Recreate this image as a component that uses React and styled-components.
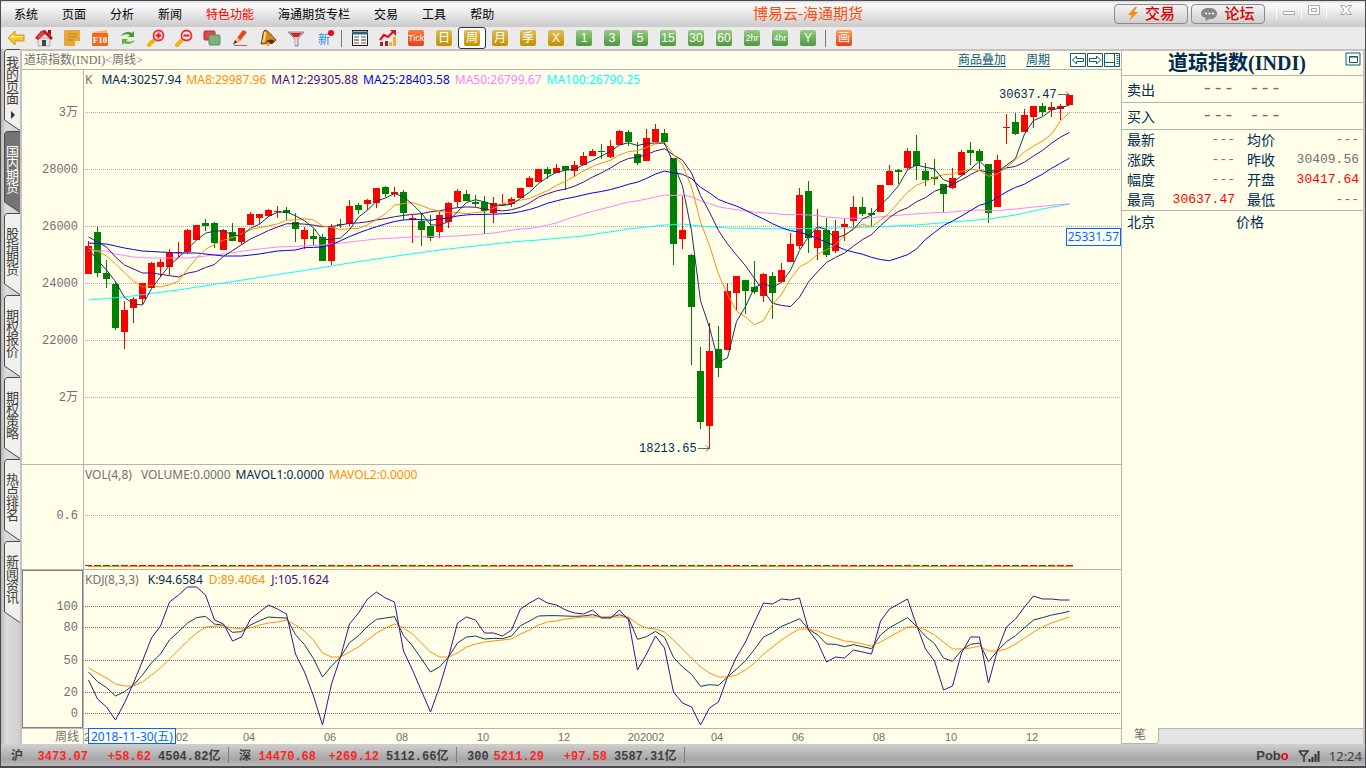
import React from 'react';
import styled, { createGlobalStyle, css } from 'styled-components';

const colors = {
  paper: '#ffffea',
  line: '#b4b4b4',
  edge: '#c9c1c1',
  navy: '#002b55',
  link: '#0b5a86',
  grey: '#707070',
  orange: '#ff8c10',
  purple: '#4b0a82',
  blue: '#0000f0',
  pink: '#ff80ff',
  cyan: '#00ffff',
  red: '#ff0000',
  green: '#008000',
  tag: '#0066ff'
};

const fonts = {
  ui: '"Liberation Sans", "Noto Sans CJK SC", sans-serif',
  serif: '"Liberation Serif", "Noto Sans CJK SC", serif',
  mono: '"Liberation Mono", "Noto Sans CJK SC", monospace',
  legend: '"Noto Sans", "Noto Sans CJK SC", sans-serif'
};

const GlobalStyle = createGlobalStyle`
  * {
    box-sizing: border-box;
  }
  body {
    margin: 0;
    background: #c8c8c8;
    font-family: ${fonts.ui};
    font-size: 12px;
  }
  button {
    margin: 0;
    padding: 0;
    border: 0;
    background: none;
    font: inherit;
    color: inherit;
    cursor: pointer;
  }
`;

/* ---------- data ---------- */

// [up, high, top, bottom, low] in plot units, one entry per week
const CANDLES = [
  [1, 241, 246, 274, 274], [0, 227, 232, 273, 277], [0, 260, 273, 279, 288], [0, 282, 284, 328, 330],
  [1, 301, 310, 332, 349], [1, 297, 299, 308, 323], [1, 283, 283, 299, 304], [1, 262, 263, 288, 288],
  [1, 259, 262, 267, 277], [1, 249, 253, 267, 275], [1, 242, 252, 253, 257], [1, 229, 230, 252, 254],
  [1, 225, 225, 240, 240], [0, 219, 223, 226, 231], [0, 222, 223, 243, 248], [1, 229, 230, 250, 250],
  [0, 223, 232, 241, 241], [1, 228, 228, 242, 245], [1, 212, 214, 225, 225], [1, 214, 214, 218, 224],
  [1, 209, 210, 216, 217], [1, 206, 211, 212, 218], [0, 207, 210, 213, 220], [0, 213, 222, 229, 242],
  [1, 227, 230, 239, 249], [0, 229, 236, 239, 245], [0, 234, 237, 261, 261], [1, 224, 227, 261, 265],
  [0, 219, 224, 225, 228], [1, 200, 206, 224, 226], [0, 203, 205, 210, 214], [1, 199, 200, 204, 210],
  [1, 188, 188, 203, 208], [0, 186, 187, 194, 197], [1, 187, 192, 194, 197], [0, 190, 192, 213, 220],
  [1, 215, 218, 219, 243], [0, 213, 221, 230, 246], [0, 215, 226, 238, 241], [1, 212, 215, 232, 238],
  [1, 202, 203, 222, 228], [1, 189, 191, 202, 207], [0, 190, 194, 201, 201], [0, 195, 202, 204, 207],
  [0, 196, 202, 211, 234], [1, 197, 203, 213, 223], [1, 194, 204, 205, 206], [1, 197, 199, 204, 207],
  [1, 188, 188, 198, 198], [1, 176, 178, 187, 187], [1, 169, 169, 182, 182], [0, 167, 169, 174, 179],
  [1, 164, 168, 173, 173], [0, 166, 166, 170, 190], [1, 161, 165, 171, 177], [1, 152, 156, 165, 165],
  [1, 149, 151, 156, 156], [0, 144, 151, 152, 159], [1, 140, 146, 157, 158], [1, 130, 131, 145, 145],
  [0, 130, 132, 142, 146], [0, 142, 154, 163, 165], [1, 129, 138, 161, 161], [1, 124, 129, 142, 142],
  [0, 129, 133, 142, 145], [0, 158, 158, 244, 265], [1, 196, 230, 239, 249], [0, 254, 255, 307, 365],
  [0, 347, 371, 422, 429], [1, 323, 351, 426, 449], [0, 326, 349, 368, 377], [1, 283, 291, 350, 350],
  [1, 276, 276, 293, 310], [0, 280, 280, 291, 314], [0, 261, 287, 292, 294], [1, 273, 274, 296, 302],
  [0, 272, 276, 293, 319], [1, 263, 270, 282, 282], [1, 233, 244, 262, 262], [1, 188, 195, 246, 249],
  [0, 181, 191, 238, 253], [1, 209, 230, 248, 260], [0, 218, 230, 255, 257], [1, 220, 231, 251, 253],
  [1, 219, 224, 227, 241], [1, 196, 207, 221, 227], [0, 197, 207, 214, 216], [0, 208, 213, 215, 226],
  [1, 185, 185, 212, 212], [1, 165, 171, 185, 185], [0, 169, 170, 172, 184], [1, 148, 151, 168, 169],
  [0, 135, 151, 166, 180], [0, 163, 171, 180, 186], [0, 159, 177, 179, 185], [0, 184, 184, 194, 212],
  [1, 168, 178, 188, 189], [1, 150, 152, 175, 176], [0, 142, 150, 153, 165], [0, 149, 151, 161, 169],
  [0, 164, 164, 213, 223], [1, 155, 160, 207, 207], [1, 114, 127, 128, 144], [0, 113, 122, 134, 135],
  [1, 109, 115, 132, 132], [1, 106, 106, 117, 128], [0, 103, 106, 112, 116], [1, 102, 107, 110, 117],
  [1, 104, 106, 109, 120], [1, 95, 95, 105, 105]
];

// `lead` holds [week, value] points for the weeks that have no full window yet
const AVERAGES = [
  {
    period: 100,
    color: colors.cyan,
    lead: [[0, 300], [4, 297], [10, 290], [15, 283], [20, 276], [25, 269], [29, 263], [32, 259], [35, 255],
      [39, 250], [42, 247], [47, 242], [50, 240], [55, 236], [60, 229], [64, 225], [66, 224], [68, 226],
      [71, 228], [77, 229], [83, 228], [87, 227], [92, 225], [96, 222], [100, 219], [103, 215], [106, 209],
      [109, 204]]
  },
  {
    period: 50,
    color: colors.pink,
    lead: [[0, 251], [2, 251], [3, 254], [5, 257], [7, 258], [11, 258], [13, 256], [15, 254], [18, 250],
      [21, 247], [24, 246], [26, 245], [29, 242], [32, 239], [36, 237], [41, 236], [45, 233], [48, 229]]
  },
  {
    period: 25,
    color: colors.blue,
    lead: [[0, 243], [2, 244], [4, 248], [6, 251], [10, 253], [12, 253], [15, 256], [17, 256], [19, 254],
      [21, 251], [23, 250]]
  },
  {
    period: 12,
    color: colors.purple,
    lead: [[0, 237], [1, 242], [2, 247], [3, 257], [4, 265], [6, 273], [7, 273], [10, 277]]
  },
  {
    period: 8,
    color: colors.orange,
    lead: [[0, 248], [1, 251], [2, 256], [3, 264], [5, 281], [6, 287]]
  },
  { period: 4, color: '#123a58', lead: [[0, 249], [1, 260], [2, 270]] }
];

const KDJ_J = [
  110, 129, 137, 150, 133, 113, 91, 68, 56, 32, 25, 17, 17, 25, 50, 54, 71, 67, 49, 42, 35, 39, 44, 84, 102,
  126, 155, 114, 87, 54, 43, 29, 22, 28, 32, 81, 100, 121, 142, 117, 87, 53, 47, 50, 63, 63, 66, 60, 39, 33,
  28, 33, 35, 40, 43, 44, 40, 48, 48, 40, 50, 100, 84, 66, 78, 122, 133, 137, 155, 138, 132, 107, 87, 72, 52,
  33, 34, 29, 30, 28, 60, 72, 92, 87, 88, 80, 82, 84, 51, 39, 34, 29, 55, 79, 91, 120, 116, 83, 67, 67, 113,
  80, 57, 49, 37, 26, 29, 29, 30, 30
];

const KDJ_D = [
  98, 103, 108, 114, 116, 116, 112, 105, 98, 89, 80, 71, 63, 57, 56, 56, 58, 59, 58, 55, 53, 52, 50, 55, 61,
  70, 83, 87, 87, 82, 77, 70, 63, 58, 54, 58, 64, 73, 82, 87, 87, 83, 77, 74, 72, 71, 70, 69, 64, 60, 55, 52,
  51, 49, 48, 47, 47, 47, 47, 47, 47, 54, 58, 59, 62, 70, 79, 88, 97, 103, 107, 107, 105, 100, 93, 84, 77, 70,
  64, 59, 59, 61, 65, 68, 71, 72, 74, 76, 72, 67, 62, 57, 57, 60, 65, 72, 79, 79, 78, 76, 81, 81, 79, 74, 68,
  62, 57, 53, 50, 47
];

// J = 3K - 2D
const KDJ_K = KDJ_J.map((j, i) => (j + 2 * KDJ_D[i]) / 3);

const MENU = ['系统', '页面', '分析', '新闻', '特色功能', '海通期货专栏', '交易', '工具', '帮助'];
const TABS = ['我的页面', '国内期货', '股指期货', '期权报价', '期权策略', '热点排名', '新闻资讯'];

const QUOTES = [
  ['最新', '---', '均价', '---'],
  ['涨跌', '---', '昨收', '30409.56'],
  ['幅度', '---', '开盘', '30417.64'],
  ['最高', '30637.47', '最低', '---']
];

const MARKETS = [
  { name: '沪', value: '3473.07', change: '+58.62', volume: '4504.82亿' },
  { name: '深', value: '14470.68', change: '+269.12', volume: '5112.66亿' },
  { name: '300', value: '5211.29', change: '+97.58', volume: '3587.31亿' }
];

const MONTHS = [
  [3, '2'], [98, '02'], [165, '04'], [246, '06'], [318, '08'], [399, '10'], [480, '12'],
  [562, '202002'], [633, '04'], [714, '06'], [795, '08'], [867, '10'], [948, '12']
];

/* ---------- chart helpers ---------- */

const STEP = 9;
const TOP = 70;
const xAt = i => 4 + i * STEP + 0.5;

const toPoints = (values, offset = 0) => values.map((v, i) => `${xAt(i)},${v - offset}`).join(' ');

function interpolate(points, i) {
  const next = points.findIndex(p => p[0] >= i);
  if (points[next][0] === i) return points[next][1];
  const [x0, y0] = points[next - 1];
  const [x1, y1] = points[next];
  return y0 + ((y1 - y0) * (i - x0)) / (x1 - x0);
}

function movingAverage({ period, lead }) {
  const closes = CANDLES.map(([up, , top, bottom]) => (up ? top : bottom));
  const last = lead[lead.length - 1][0];
  return closes.map((c, i) => {
    if (i <= last) return interpolate(lead, i);
    const span = closes.slice(i - period + 1, i + 1);
    return span.reduce((a, b) => a + b, 0) / period;
  });
}

/* ---------- frame ---------- */

const Window = styled.div`
  display: flex;
  flex-direction: column;
  min-height: 100vh;
  border: solid #4c4a4e;
  border-width: 1px 1px 2px 1px;
  background: #ebebeb;
`;

const MenuBar = styled.header`
  display: flex;
  align-items: center;
  justify-content: space-between;
  height: 26px;
  padding-left: 13px;
  background: linear-gradient(#d8d8d8 0, #fafafa 3px, #f0f0f0 9px, #cacaca);
`;

const Menu = styled.nav`
  display: flex;
  gap: 24px;
  padding-top: 2px;
`;

const MenuItem = styled.button`
  line-height: 20px;
  color: ${({ $hot }) => ($hot ? colors.red : '#000')};
`;

const AppTitle = styled.h1`
  margin: 0 0 0 8px;
  font-size: 15px;
  font-weight: 400;
  line-height: 20px;
  color: #ff4d0d;
`;

const WindowTools = styled.div`
  display: flex;
  align-items: center;
  gap: 3px;
  height: 100%;
`;

const PillButton = styled.button`
  display: flex;
  align-items: center;
  justify-content: center;
  gap: 6px;
  width: 74px;
  height: 20px;
  border: 1px solid #8a8a8a;
  border-radius: 4px;
  background: linear-gradient(#f4f4f4, #cfcfcf);
  color: #e00000;
  font-size: 15px;
  font-weight: 500;
  line-height: 18px;
`;

const Controls = styled.div`
  display: flex;
  align-items: flex-start;
  height: 22px;
  margin-left: 8px;
`;

const Control = styled.button`
  width: ${({ $wide }) => ($wide ? 39 : 25)}px;
  height: 16px;
  border-left: 1px solid #fff;
`;

const Toolbar = styled.div`
  display: flex;
  align-items: center;
  height: 22px;
  padding-left: 1px;
`;

const ToolButton = styled.button`
  display: flex;
  align-items: center;
  justify-content: center;
  width: 28px;
  height: 22px;
  border: 1px solid transparent;
  border-radius: 3px;
  ${({ $active }) =>
    $active &&
    css`
      border-color: #333;
      background: #fff;
    `}
`;

const Divider = styled.span`
  width: 2px;
  height: 17px;
  margin: 0 3px;
  border-left: 1px solid #777;
`;

const tones = {
  gold: 'linear-gradient(#dcbc5c, #c49000)',
  green: 'linear-gradient(#98cc84, #4c9840)',
  tick: 'linear-gradient(#ff7a48, #e84018)',
  paint: 'linear-gradient(#ffa050, #ee3a18)'
};

const Badge = styled.span`
  width: 16px;
  height: 16px;
  border-radius: 2px;
  background: ${({ $tone }) => tones[$tone]};
  color: #fffff0;
  font-size: ${({ $small }) => ($small ? 9 : 12)}px;
  line-height: 16px;
  text-align: center;
`;

const NewLabel = styled.span`
  position: relative;
  color: #2f8be6;
  font-size: 12px;

  &::after {
    content: '';
    position: absolute;
    top: 0;
    right: -4px;
    width: 6px;
    height: 6px;
    border-radius: 50%;
    background: #ff0010;
  }
`;

const Body = styled.main`
  display: grid;
  grid-template-columns: 19px minmax(0, 1fr) 243px;
  flex: 1;
`;

/* ---------- side tabs ---------- */

const SideBar = styled.nav`
  display: flex;
  flex-direction: column;
  padding-left: 2px;
  background: linear-gradient(90deg, #b8b8b8, #dcdcdc 5px, #cfcfcf);
`;

const SideTab = styled.button`
  position: relative;
  height: 82px;
  padding: 0 1px 5px 3px;
  font-size: 13px;
  line-height: 12px;
  color: ${({ $active }) => ($active ? '#fff' : '#404040')};

  svg {
    position: absolute;
    top: 0;
    left: 0;
  }
  span {
    position: relative;
    display: block;
    width: 13px;
    word-break: break-all;
  }
`;

const Arrow = styled.i`
  display: block;
  width: 0;
  margin: 6px auto 0 5px;
  border: solid transparent;
  border-width: 4px 0 4px 4px;
  border-left-color: #333;
`;

/* ---------- chart ---------- */

const Chart = styled.section`
  display: grid;
  grid-template-rows: 19px minmax(395px, 1fr) 105px 159px 15px;
  border-top: 2px solid ${colors.edge};
  border-left: 2px solid ${colors.edge};
  border-right: 1px solid ${colors.line};
  background: ${colors.paper};
  min-width: 0;
`;

const ChartHeader = styled.div`
  display: flex;
  align-items: center;
  padding-left: 2px;
  border-bottom: 1px solid ${colors.line};
`;

const ChartName = styled.h2`
  flex: 1;
  margin: 0;
  font: 400 12px/17px ${fonts.serif};
  color: ${colors.grey};
`;

const HeaderLink = styled.a`
  margin-right: 20px;
  font-size: 12px;
  line-height: 16px;
  color: ${colors.link};
  text-underline-offset: 2px;
`;

const Pane = styled.div`
  display: grid;
  grid-template-columns: 61px minmax(0, 1fr);
  grid-template-rows: minmax(0, 1fr);
  min-height: 0;
  border-bottom: 1px solid ${colors.line};
`;

const Scale = styled.svg`
  display: block;
  width: 100%;
  height: 100%;
  font-family: ${fonts.mono};
  font-size: 12px;
  fill: ${colors.grey};
  text-anchor: end;
  ${({ $boxed }) =>
    $boxed &&
    css`
      border: 1px solid #808080;
    `}
`;

const PlotArea = styled.div`
  position: relative;
  border-left: 1px solid ${colors.line};
`;

const Plot = styled.svg`
  display: block;
  width: 100%;
  height: 100%;
  font-family: ${fonts.mono};
  font-size: 12px;
  fill: ${colors.navy};
`;

const Legend = styled.div`
  position: absolute;
  top: 1px;
  left: 1px;
  display: flex;
  gap: 5px;
  font: 12px/17px ${fonts.legend};
  white-space: nowrap;
`;

const LegendItem = styled.span`
  color: ${({ $color }) => $color};
  margin-right: ${({ $gap }) => $gap || 0}px;
`;

const Tag = styled.div`
  position: absolute;
  border: 1px solid ${colors.tag};
  background: #fff;
  color: ${colors.tag};
  font: 12px/16px ${fonts.legend};
  padding: 0 1px;
  white-space: nowrap;
`;

const PriceTag = styled(Tag)`
  top: 158px;
  right: 0;
`;

const DateTag = styled(Tag)`
  top: -1px;
  left: 4px;
  height: 16px;
  padding: 0 2px;
`;

const DateRow = styled(Pane)`
  border-bottom: 0;
`;

const DateLabels = styled(Plot)`
  font-family: ${fonts.ui};
  font-size: 11px;
  fill: ${colors.grey};
  text-anchor: middle;
`;

/* ---------- quote panel ---------- */

const Panel = styled.aside`
  display: flex;
  flex-direction: column;
  border-top: 2px solid ${colors.edge};
  border-right: 2px solid ${colors.edge};
  background: ${colors.paper};
  color: ${colors.navy};
  font-size: 14px;
`;

const PanelTitle = styled.div`
  display: flex;
  align-items: flex-start;
  height: 25px;
  padding: 1px 1px 0 7px;
  border-bottom: 1px solid ${colors.line};

  h2 {
    flex: 1;
    margin: 0;
    font: 700 20px/23px ${fonts.serif};
    text-align: center;
  }
`;

const BookRow = styled.div`
  display: flex;
  align-items: center;
  height: 27px;
  padding-left: 5px;
  border-bottom: 1px solid ${colors.line};

  b {
    width: 75px;
    font-weight: 400;
  }
  span {
    width: 47px;
    font: 18px/20px ${fonts.mono};
    color: ${colors.grey};
  }
`;

const QuoteTable = styled.table`
  width: 100%;
  table-layout: fixed;
  border-collapse: collapse;
  border-bottom: 1px solid ${colors.line};

  th,
  td {
    height: 20px;
    padding: 0;
    line-height: 20px;
  }
  th {
    width: 41px;
    padding-left: 5px;
    font-weight: 400;
    text-align: left;
  }
  th + td + th {
    width: 48px;
    padding-left: 12px;
  }
`;

const Price = styled.td`
  width: ${({ $last }) => ($last ? 'auto' : '72px')};
  font-family: ${fonts.mono};
  font-size: 13px;
  text-align: right;
  color: ${({ $up }) => ($up ? colors.red : colors.grey)};

  &&:last-child {
    padding-right: 4px;
  }
`;

const TradesHead = styled.div`
  display: flex;
  flex: 1;
  padding: 1px 0 0 5px;
  line-height: 20px;

  span {
    width: 109px;
  }
`;

const PanelTabs = styled.div`
  display: flex;
  height: 16px;
  border-top: 1px solid ${colors.line};
  background: #e4e4e4;

  button {
    width: 37px;
    margin-top: -1px;
    border: solid ${colors.line};
    border-width: 0 1px 1px 0;
    border-radius: 0 0 4px 0;
    background: ${colors.paper};
    color: ${colors.grey};
    font-size: 12px;
    line-height: 15px;
  }
`;

/* ---------- status bar ---------- */

const StatusBar = styled.footer`
  display: flex;
  align-items: center;
  height: 22px;
  background: linear-gradient(#d0d0d0, #a6a6a6 70%, #bcbcbc);
  font: 700 12px/20px ${fonts.mono};
  color: #404040;
`;

const Market = styled.div`
  display: grid;
  grid-template-columns: 77px 63px 1fr;
  width: 228px;
  padding: 2px 0 0 10px;
  height: 16px;
  line-height: 16px;
  border-right: 1px solid #808080;
  white-space: nowrap;

  em {
    font-style: normal;
    color: #fa2828;
    text-align: right;
  }
  div {
    display: flex;
    justify-content: space-between;
  }
  span {
    padding-left: 7px;
  }
`;

const StatusRight = styled.div`
  display: flex;
  align-items: center;
  gap: 9px;
  margin-left: auto;
  padding: 2px 3px 0 0;
  font-family: ${fonts.ui};

  strong {
    font-size: 13px;
  }
  strong i {
    color: #f00000;
    font-style: normal;
  }
  time {
    font: 13px/20px ${fonts.legend};
  }
`;

/* ---------- icons ---------- */

const Icon = ({ children, size = 18 }) => (
  <svg width={size} height={size} viewBox="0 0 18 18" aria-hidden="true">
    {children}
  </svg>
);

const BackIcon = () => (
  <Icon>
    <path d="M1 9l7-7v4h9v6H8v4z" fill="#f8c428" stroke="#c48a10" strokeWidth="0.8" />
    <path d="M3 9l4-4v2h9v1z" fill="#fde880" />
  </Icon>
);

const HomeIcon = () => (
  <Icon>
    <path d="M3 9h12v8H3z" fill="#e4e4ec" stroke="#888" strokeWidth="0.6" />
    <path d="M7 11h4v6H7z" fill="#444" />
    <path d="M0 9l6-7 4-1 8 8-2 2-6-6-7 6z" fill="#c81018" />
    <path d="M2 8l5-6 3 3-6 5z" fill="#e84048" />
    <path d="M13 1h3v6l-3-3z" fill="#a01010" />
  </Icon>
);

const NoteIcon = () => (
  <Icon>
    <path d="M2 1h15v11l-5 5H1V2z" fill="#e8a838" />
    <path d="M12 17v-5h5z" fill="#ffe4b0" />
    <path d="M5 5h9M5 8h9M4 11h7" stroke="#c08020" />
  </Icon>
);

const F10Icon = () => (
  <Icon>
    <path d="M2 3l14-2v14H2z" fill="#f8b070" />
    <rect x="1" y="4" width="16" height="13" rx="1" fill="#f06820" />
    <text x="9" y="14" fontSize="9" fontWeight="700" fill="#fff" textAnchor="middle" fontFamily="Liberation Serif">
      F10
    </text>
  </Icon>
);

const RefreshIcon = () => (
  <Icon>
    <path d="M2 7c2-4 8-5 11-3l2-2v6H9l2-2C9 5 5 5 2 7z" fill="#3fa028" />
    <path d="M16 11c-2 4-8 5-11 3l-2 2v-6h6l-2 2c2 1 6 1 9-1z" fill="#58b838" />
  </Icon>
);

const ZoomIcon = ({ plus }) => (
  <Icon>
    <path d="M7 11l-5 5" stroke="#f4b010" strokeWidth="4" strokeLinecap="round" />
    <circle cx="11.500" cy="6.500" r="5" fill="#ffe8e8" stroke="#e83030" strokeWidth="1.800" />
    <path d={plus ? 'M8.500 6.500h6M11.500 3.500v6' : 'M8.500 6.500h6'} stroke="#e02020" strokeWidth="2" />
  </Icon>
);

const OverlayIcon = () => (
  <Icon>
    <rect x="1" y="2" width="11" height="9" rx="1" fill="#e04848" stroke="#b83030" />
    <rect x="6" y="6" width="11" height="10" rx="1" fill="#80b080" stroke="#589060" />
  </Icon>
);

const PencilIcon = () => (
  <Icon>
    <path d="M12 1l4 2-7 9-4 2 1-5z" fill="#f04020" />
    <path d="M6 8l3 3-2 2-3-2z" fill="#f8c890" />
    <path d="M4 11l2 2-4 3z" fill="#303030" />
    <path d="M3 16.500h13" stroke="#f05030" />
  </Icon>
);

const BellIcon = () => (
  <Icon>
    <path d="M6 1c4 1 6 5 11 10l-3 3-12 1C4 10 3 3 6 1z" fill="#d88c20" stroke="#783808" />
    <path d="M6 3c0 4 0 7-2 10" stroke="#ffe080" strokeWidth="2" fill="none" />
    <path d="M7 13c2-3 5-3 8-2l-1 3-6 2z" fill="#602808" />
    <circle cx="9" cy="15" r="2" fill="#e8a830" />
  </Icon>
);

const FilterIcon = () => (
  <Icon>
    <path d="M1 3h16l-6 7v7H8v-7z" fill="#c8ccd0" stroke="#787c80" strokeWidth="0.800" />
    <path d="M3 4h12l-4 4H7z" fill="#e81820" />
    <path d="M9 10v6" stroke="#f4f4f4" />
  </Icon>
);

const ListIcon = () => (
  <Icon>
    <rect x="1.500" y="1.500" width="15" height="15" fill="#fff" stroke="#222" />
    <path d="M1 4h16" stroke="#306080" strokeWidth="3" />
    <path d="M3 8h5M10 8h5" stroke="#208020" />
    <path d="M3 11h5M10 11h5" stroke="#202080" />
    <path d="M3 14h5M10 14h5" stroke="#c02020" />
  </Icon>
);

const TrendIcon = () => (
  <Icon>
    <path d="M1 17v-4h3v4zM6 17v-5h3v5z" fill="#b02028" />
    <path d="M10 17v-4h3v4zM14 17V8h3v9z" fill="#e8b040" />
    <path d="M1 11l4-5 4 2 6-6" stroke="#e01018" strokeWidth="2.200" fill="none" />
    <path d="M11 1h6v6z" fill="#e01018" />
  </Icon>
);

const SignalIcon = () => (
  <svg width="22" height="14" viewBox="0 0 22 14" aria-hidden="true">
    <path d="M1 2h9L6 7v6M5 7L1 2" fill="none" stroke="#333" strokeWidth="1.500" />
    <path d="M11.500 10v3M14.500 8v5M17.500 5v8M20.500 2v11" stroke="#333" strokeWidth="2" />
  </svg>
);

const NavIcons = () => (
  <svg width="51" height="15" viewBox="0 0 51 15" aria-hidden="true">
    <g fill="none" stroke={colors.link}>
      <path d="M.5.5h15v13H.5zM17.500.5h15v13h-15zM34.500.5h15v13h-15z" />
      <path d="M2.500 7l4-4v2.500h7v3h-7V11zM30.500 7l-4-4v2.500h-7v3h7V11z" />
      <path d="M34.500 9.500h10M44.500.5v13" />
      <path d="M47.500 2v10" strokeDasharray="1 1" strokeWidth="2" />
    </g>
  </svg>
);

const TabShape = ({ active }) => (
  <svg width="17" height="82" aria-hidden="true">
    <path
      d="M17 .5H3.500L1.500 3v68L17 81.500"
      fill={active ? '#747474' : '#f0f0ec'}
      stroke="#4a4a4a"
    />
  </svg>
);

/* ---------- toolbar ---------- */

const ACTIONS = [
  ['后退', <BackIcon />],
  ['主页', <HomeIcon />],
  ['笔记', <NoteIcon />],
  ['资料', <F10Icon />],
  ['刷新', <RefreshIcon />],
  ['放大', <ZoomIcon plus />],
  ['缩小', <ZoomIcon />],
  ['叠加', <OverlayIcon />],
  ['画笔', <PencilIcon />],
  ['预警', <BellIcon />],
  ['筛选', <FilterIcon />],
  ['新功能', <NewLabel>新</NewLabel>]
];

const PERIODS = [
  ['Tick', 'tick'], ['日', 'gold'], ['周', 'gold'], ['月', 'gold'], ['季', 'gold'], ['X', 'gold'],
  ['1', 'green'], ['3', 'green'], ['5', 'green'], ['15', 'green'], ['30', 'green'], ['60', 'green'],
  ['2hr', 'green'], ['4hr', 'green'], ['Y', 'green']
];

const ToolStrip = () => (
  <Toolbar>
    {ACTIONS.map(([label, icon]) => (
      <ToolButton key={label} aria-label={label}>
        {icon}
      </ToolButton>
    ))}
    <Divider />
    <ToolButton aria-label="报价">
      <ListIcon />
    </ToolButton>
    <ToolButton aria-label="走势">
      <TrendIcon />
    </ToolButton>
    {PERIODS.map(([label, tone]) => (
      <ToolButton key={label} $active={label === '周'}>
        <Badge $tone={tone} $small={label.length > 2}>
          {label}
        </Badge>
      </ToolButton>
    ))}
    <Divider />
    <ToolButton>
      <Badge $tone="paint">画</Badge>
    </ToolButton>
  </Toolbar>
);

/* ---------- panes ---------- */

const Grid = ({ rows, color }) =>
  rows.map(y => <line key={y} x1="1" x2="100%" y1={y + 0.5} y2={y + 0.5} stroke={color} strokeDasharray="1 1" />);

const Curve = ({ points, color }) => (
  <polyline points={points} fill="none" stroke={color} strokeWidth="1" />
);

const PRICES = [[42, '3万'], [99, '28000'], [156, '26000'], [213, '24000'], [270, '22000'], [327, '2万']];
const LEVELS = [[36, '100'], [57, '80'], [90, '50'], [122, '20'], [143, '0']];

const PricePane = () => (
  <Pane>
    <Scale>
      {PRICES.map(([y, label]) => (
        <text key={y} x="56" y={y + 4}>
          {label}
        </text>
      ))}
    </Scale>
    <PlotArea>
      <Plot>
        <Grid rows={PRICES.map(p => p[0])} color="#aaa" />
        {CANDLES.map(([up, high, top, bottom, low], i) => (
          <g key={i} fill={up ? colors.red : colors.green}>
            <rect x={4 + i * STEP} y={high - TOP} width="1" height={low - high} />
            <rect x={1 + i * STEP} y={top - TOP} width="7" height={bottom - top} />
          </g>
        ))}
        {AVERAGES.map(avg => (
          <Curve key={avg.period} points={toPoints(movingAverage(avg), TOP)} color={avg.color} />
        ))}
        <text x="915" y="28">30637.47</text>
        <text x="555" y="382">18213.65</text>
        <path d="M974 24.500h11m-3-3l3 3-3 3M614 378.500h11m-3-3l3 3-3 3" fill="none" stroke="#666" />
      </Plot>
      <Legend>
        <LegendItem $color={colors.grey} $gap={4}>K</LegendItem>
        <LegendItem $color={colors.navy}>MA4:30257.94</LegendItem>
        <LegendItem $color={colors.orange}>MA8:29987.96</LegendItem>
        <LegendItem $color={colors.purple}>MA12:29305.88</LegendItem>
        <LegendItem $color={colors.blue}>MA25:28403.58</LegendItem>
        <LegendItem $color={colors.pink}>MA50:26799.67</LegendItem>
        <LegendItem $color={colors.cyan}>MA100:26790.25</LegendItem>
      </Legend>
      <PriceTag>25331.57</PriceTag>
    </PlotArea>
  </Pane>
);

const VolumePane = () => (
  <Pane>
    <Scale>
      <text x="56" y="54">0.6</text>
    </Scale>
    <PlotArea>
      <Plot>
        <Grid rows={[50]} color="#aaa" />
        {CANDLES.map(([up], i) => (
          <rect key={i} x={1 + i * STEP} y="100" width="7" height="1" fill={up ? colors.red : colors.green} />
        ))}
        <path d="M4 101.500h985" stroke={colors.orange} />
      </Plot>
      <Legend>
        <LegendItem $color={colors.grey} $gap={4}>VOL(4,8)</LegendItem>
        <LegendItem $color={colors.grey}>VOLUME:0.0000</LegendItem>
        <LegendItem $color={colors.navy}>MAVOL1:0.0000</LegendItem>
        <LegendItem $color={colors.orange}>MAVOL2:0.0000</LegendItem>
      </Legend>
    </PlotArea>
  </Pane>
);

const KdjPane = () => (
  <Pane>
    <Scale $boxed>
      {LEVELS.map(([y, label]) => (
        <text key={y} x="55" y={y + 3}>
          {label}
        </text>
      ))}
    </Scale>
    <PlotArea>
      <Plot>
        <Grid rows={LEVELS.map(l => l[0])} color="#707070" />
        <Curve points={toPoints(KDJ_K)} color="#123a58" />
        <Curve points={toPoints(KDJ_D)} color={colors.orange} />
        <Curve points={toPoints(KDJ_J)} color={colors.purple} />
      </Plot>
      <Legend>
        <LegendItem $color={colors.grey} $gap={4}>KDJ(8,3,3)</LegendItem>
        <LegendItem $color={colors.navy} $gap={1}>K:94.6584</LegendItem>
        <LegendItem $color={colors.orange} $gap={1}>D:89.4064</LegendItem>
        <LegendItem $color={colors.purple}>J:105.1624</LegendItem>
      </Legend>
    </PlotArea>
  </Pane>
);

const DatePane = () => (
  <DateRow>
    <Scale>
      <text x="57" y="12">周线</text>
    </Scale>
    <PlotArea>
      <DateLabels>
        {MONTHS.map(([x, label]) => (
          <text key={x} x={x} y="12">
            {label}
          </text>
        ))}
      </DateLabels>
      <DateTag>2018-11-30(五)</DateTag>
    </PlotArea>
  </DateRow>
);

const QuotePanel = () => (
  <Panel>
    <PanelTitle>
      <h2>道琼指数(INDI)</h2>
      <svg width="17" height="15" aria-hidden="true">
        <path d="M1 1h14v12H1zM4.500 4.500h8v6h-8zM4.500 5h8" fill="none" stroke={colors.link} />
      </svg>
    </PanelTitle>
    {['卖出', '买入'].map(side => (
      <BookRow key={side}>
        <b>{side}</b>
        <span>---</span>
        <span>---</span>
      </BookRow>
    ))}
    <QuoteTable>
      <tbody>
        {QUOTES.map(([a, x, b, y]) => (
          <tr key={a}>
            <th scope="row">{a}</th>
            <Price $up={a === '最高'}>{x}</Price>
            <th scope="row">{b}</th>
            <Price $last $up={b === '开盘'}>{y}</Price>
          </tr>
        ))}
      </tbody>
    </QuoteTable>
    <TradesHead>
      <span>北京</span>
      <span>价格</span>
    </TradesHead>
    <PanelTabs>
      <button>笔</button>
    </PanelTabs>
  </Panel>
);

export default function App() {
  return (
    <Window>
      <GlobalStyle />
      <MenuBar>
        <Menu>
          {MENU.map(item => (
            <MenuItem key={item} $hot={item === '特色功能'}>
              {item}
            </MenuItem>
          ))}
        </Menu>
        <AppTitle>博易云-海通期货</AppTitle>
        <WindowTools>
          <PillButton>
            <svg width="12" height="14" viewBox="0 0 12 14" aria-hidden="true">
              <path d="M8 0L1 8h4l-3 6 9-9H7l3-5z" fill="#f09018" />
            </svg>
            交易
          </PillButton>
          <PillButton>
            <svg width="17" height="13" viewBox="0 0 17 13" aria-hidden="true">
              <path d="M8 0c5 0 8 2 8 5.500S13 11 9 11l-5 2 1-3C2 9.500 0 8 0 5.500 0 2 3 0 8 0z" fill="#888" />
              <path d="M4 5.500h2M7.500 5.500h2M11 5.500h2" stroke="#fff" strokeWidth="1.500" />
            </svg>
            论坛
          </PillButton>
          <Controls>
            <Control aria-label="最小化">
              <svg width="20" height="14">
                <path d="M4.500 8.500h11v3h-11z" fill="#fff" stroke="#a8a8a8" />
              </svg>
            </Control>
            <Control aria-label="最大化">
              <svg width="20" height="14">
                <path d="M4.500 2.500h11v9h-11zM7.500 5.500h5v3h-5z" fill="#fff" stroke="#a8a8a8" />
              </svg>
            </Control>
            <Control $wide aria-label="关闭">
              <svg width="20" height="14">
                <path
                  d="M4.500 2.500h4l1.500 2 1.500-2h4L12 7l3.500 4.500h-4l-1.500-2-1.500 2h-4L8 7z"
                  fill="#fff"
                  stroke="#a0a0a0"
                />
              </svg>
            </Control>
          </Controls>
        </WindowTools>
      </MenuBar>
      <ToolStrip />
      <Body>
        <SideBar>
          {TABS.map((tab, i) => (
            <SideTab key={tab} $active={i === 1}>
              <TabShape active={i === 1} />
              <span>
                {tab}
                {i === 0 && <Arrow />}
              </span>
            </SideTab>
          ))}
        </SideBar>
        <Chart>
          <ChartHeader>
            <ChartName>道琼指数(INDI)&lt;周线&gt;</ChartName>
            <HeaderLink href="#overlay">商品叠加</HeaderLink>
            <HeaderLink href="#period">周期</HeaderLink>
            <NavIcons />
          </ChartHeader>
          <PricePane />
          <VolumePane />
          <KdjPane />
          <DatePane />
        </Chart>
        <QuotePanel />
      </Body>
      <StatusBar>
        {MARKETS.map(m => (
          <Market key={m.name}>
            <div>
              {m.name}
              <em>{m.value}</em>
            </div>
            <em>{m.change}</em>
            <span>{m.volume}</span>
          </Market>
        ))}
        <StatusRight>
          <strong>
            Pob<i>o</i>
          </strong>
          <SignalIcon />
          <time>12:24</time>
        </StatusRight>
      </StatusBar>
    </Window>
  );
}
